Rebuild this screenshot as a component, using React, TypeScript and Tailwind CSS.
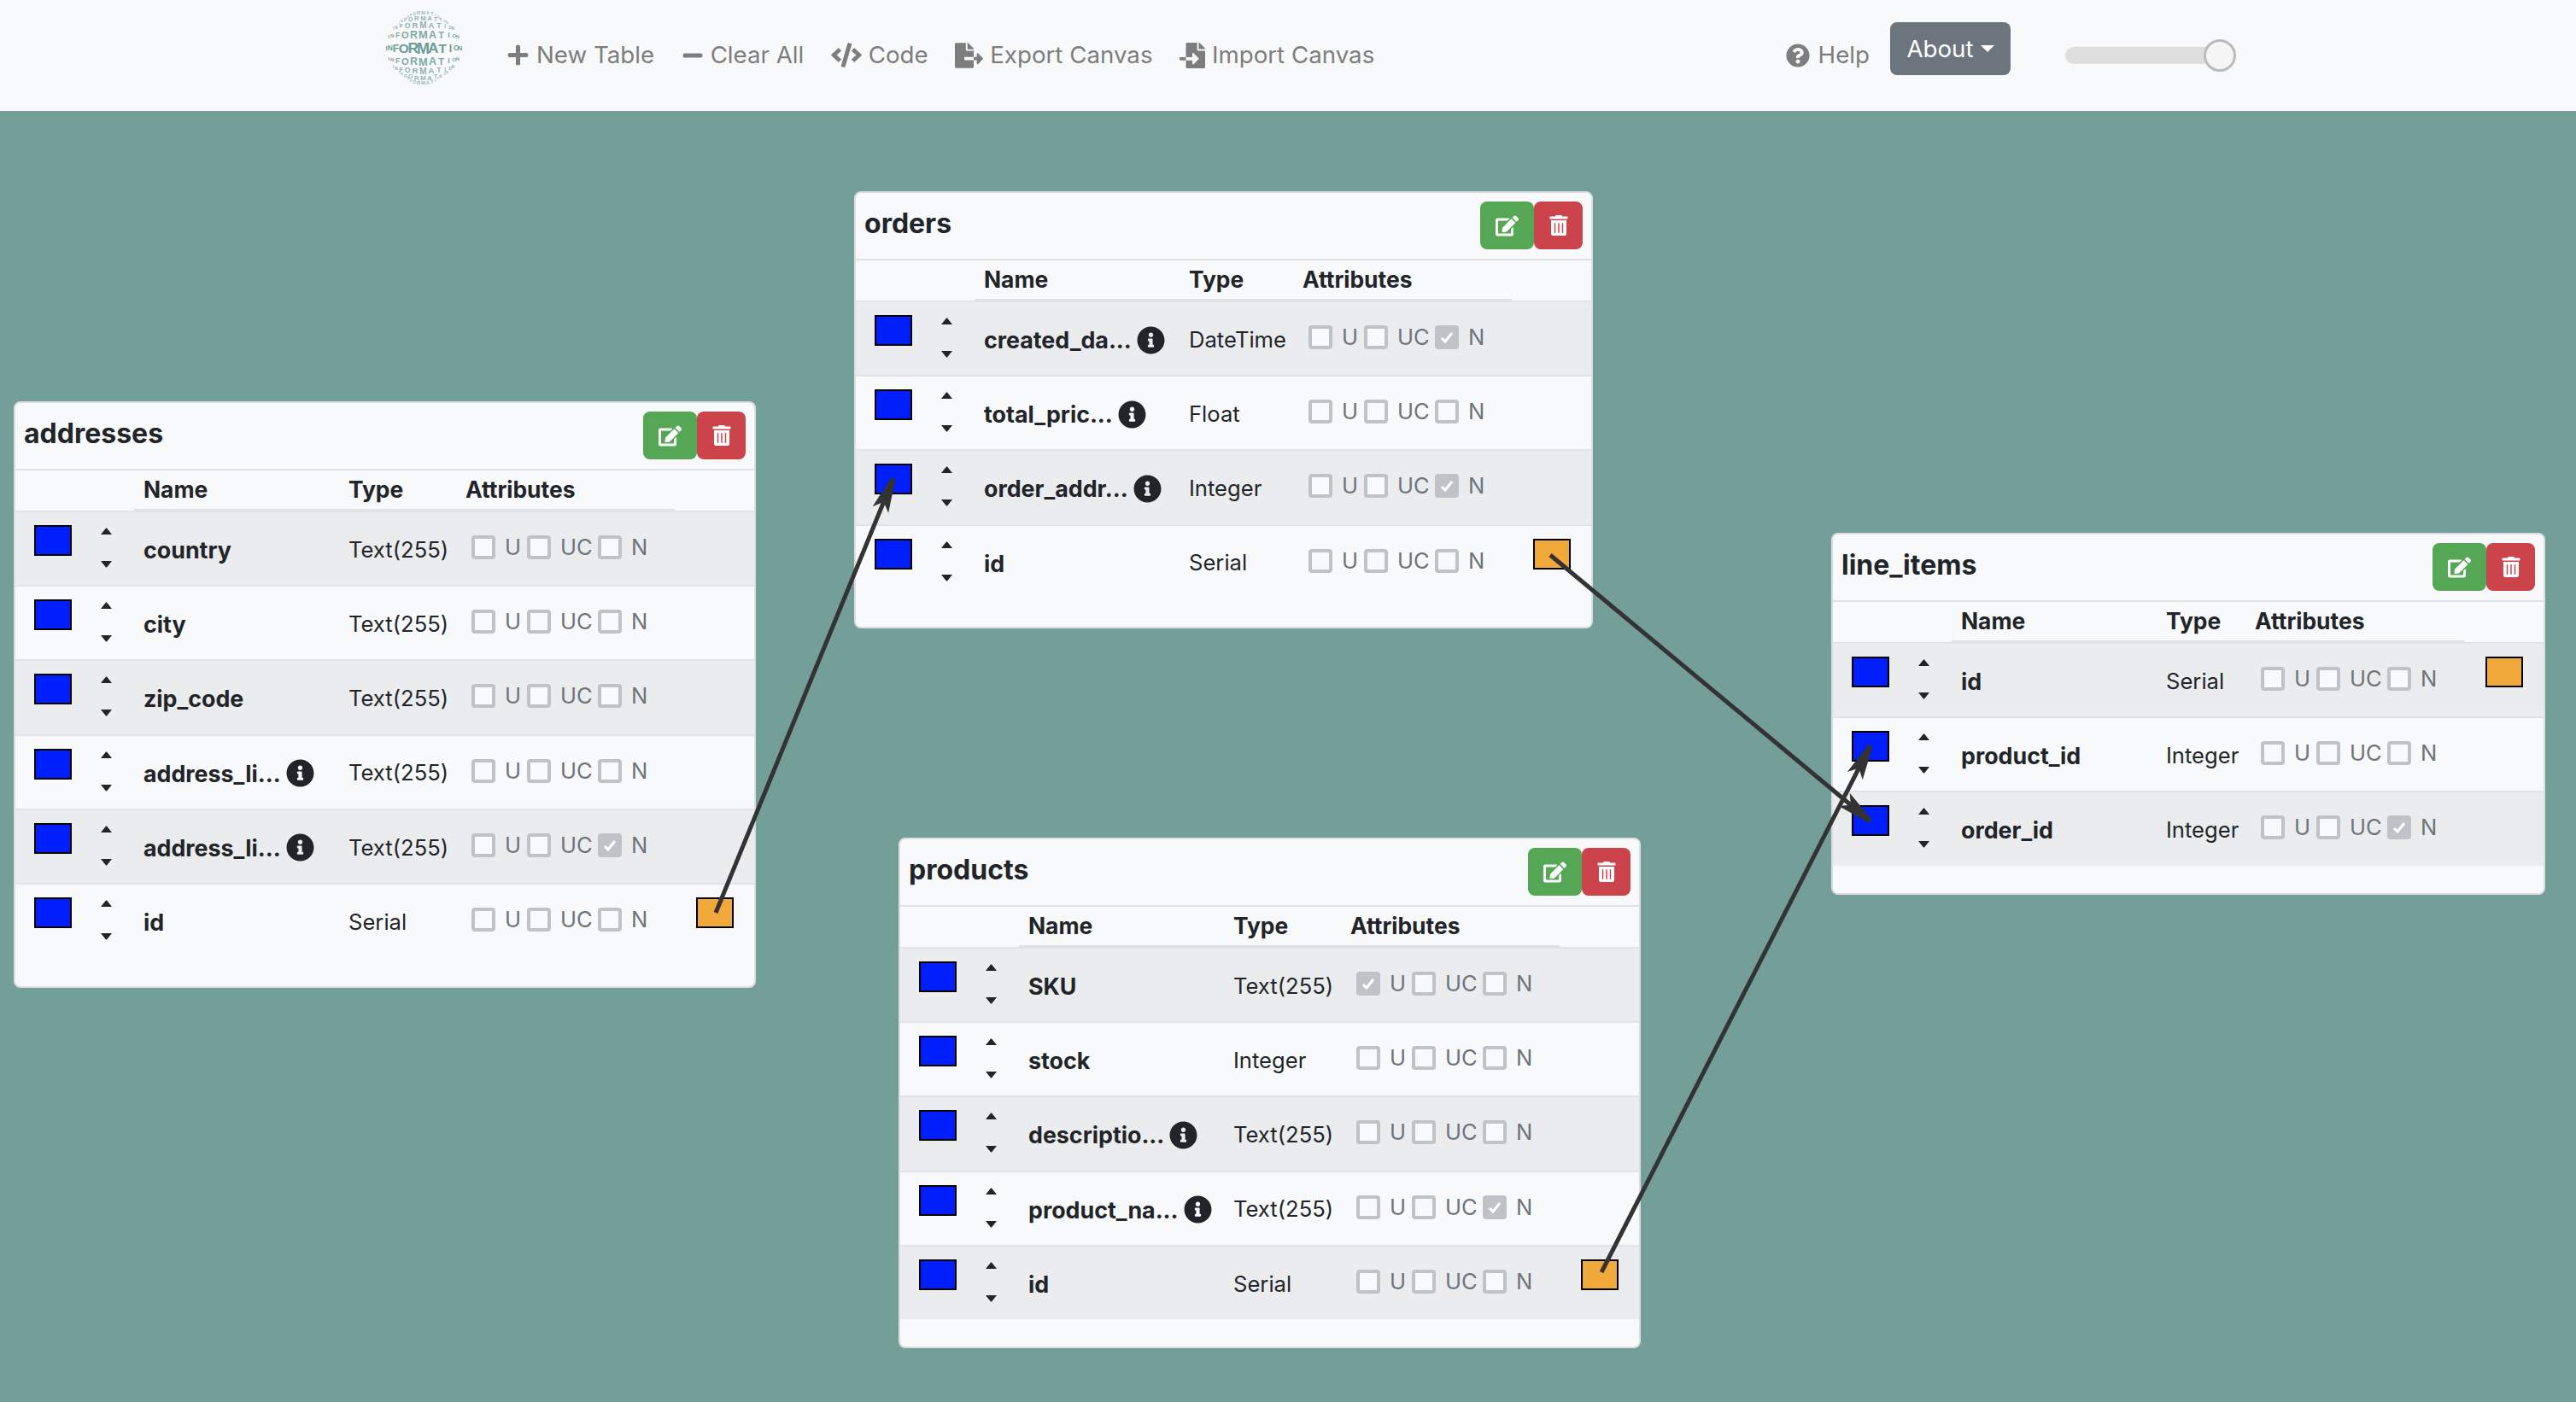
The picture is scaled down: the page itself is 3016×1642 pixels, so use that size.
import { FaPlus, FaMinus, FaCode, FaFileExport, FaFileImport, FaQuestionCircle, FaEdit, FaTrashAlt, FaInfoCircle } from "react-icons/fa";

type Field = { name: string; type: string; info?: boolean; u?: boolean; n?: boolean; key?: boolean };

const addresses: Field[] = [
	{ name: "country", type: "Text(255)" },
	{ name: "city", type: "Text(255)" },
	{ name: "zip_code", type: "Text(255)" },
	{ name: "address_li...", type: "Text(255)", info: true },
	{ name: "address_li...", type: "Text(255)", info: true, n: true },
	{ name: "id", type: "Serial", key: true },
];

const orders: Field[] = [
	{ name: "created_da...", type: "DateTime", info: true, n: true },
	{ name: "total_pric...", type: "Float", info: true },
	{ name: "order_addr...", type: "Integer", info: true, n: true },
	{ name: "id", type: "Serial", key: true },
];

const products: Field[] = [
	{ name: "SKU", type: "Text(255)", u: true },
	{ name: "stock", type: "Integer" },
	{ name: "descriptio...", type: "Text(255)", info: true },
	{ name: "product_na...", type: "Text(255)", info: true, n: true },
	{ name: "id", type: "Serial", key: true },
];

const lineItems: Field[] = [
	{ name: "id", type: "Serial", key: true },
	{ name: "product_id", type: "Integer" },
	{ name: "order_id", type: "Integer", n: true },
];

export default function App() {
	return (
		<div className="flex h-[1642px] w-[3016px] flex-col overflow-hidden bg-[#749e98] font-['Inter',sans-serif]">
			<Navbar />
			<div className="relative flex-1">
				<TableCard title="addresses" fields={addresses} className="left-[16px] top-[340px] h-[687px] w-[869px]" typeCol="w-[137px]" underline="w-[633px]" />
				<TableCard title="orders" fields={orders} className="left-[1000px] top-[94px] h-[512px] w-[865px]" typeCol="w-[133px]" underline="w-[629px]" />
				<TableCard title="products" fields={products} className="left-[1052px] top-[851px] h-[598px] w-[869px]" typeCol="w-[137px]" underline="w-[633px]" />
				<TableCard title="line_items" fields={lineItems} className="left-[2144px] top-[494px] h-[424px] w-[836px]" typeCol="w-[104px]" underline="w-[600px]" />
				<Arrows />
			</div>
		</div>
	);
}

function Navbar() {
	return (
		<div className="flex h-[130px] items-center bg-[#f8f9fa] pl-[449px] pr-[398px] text-[27.7px] text-[#7d7d7d]">
			<Globe />
			<div className="ml-[51px] flex items-center gap-[31.5px]">
				<NavItem icon={<FaPlus className="h-[27px] w-[27px]" />} label="New Table" />
				<NavItem icon={<FaMinus className="h-[26px] w-[26px]" />} label="Clear All" />
				<NavItem icon={<FaCode className="h-[29px] w-[36px]" />} label="Code" />
				<NavItem icon={<FaFileExport className="h-[32px] w-[33px]" />} label="Export Canvas" />
				<NavItem icon={<FaFileImport className="h-[30px] w-[30px]" />} label="Import Canvas" />
			</div>
			<div className="ml-auto flex items-center">
				<div className="flex items-center gap-[10px]">
					<FaQuestionCircle className="h-[28px] w-[28px]" />
					<span>Help</span>
				</div>
				<button className="mb-[16px] ml-[24px] flex h-[62px] w-[141px] items-center justify-center gap-[8px] rounded-[8px] bg-[#6c757d] pt-[2px] text-white">
					About
					<span className="mt-[-2px] h-0 w-0 border-x-[8px] border-t-[8px] border-x-transparent border-t-white" />
				</button>
				<div className="relative ml-[64px] h-[20px] w-[200px] rounded-[10px]">
					<div className="h-[20px] w-[180px] rounded-[10px] bg-[#dedede]" />
					<div className="absolute right-0 top-[-9px] h-[38px] w-[38px] rounded-full border-[3px] border-[#bbbbbb] bg-[#f4f5f4]" />
				</div>
			</div>
		</div>
	);
}

function NavItem({ icon, label }: { icon: React.ReactNode; label: string }) {
	return (
		<div className="flex items-center gap-[8px]">
			{icon}
			<span>{label}</span>
		</div>
	);
}

// rows of the word wrapped round a ball, each letter placed by hand
function Globe() {
	const rows = [
		{ dy: 0, size: 18 },
		{ dy: -16, size: 13 },
		{ dy: 16, size: 13 },
		{ dy: -27, size: 10 },
		{ dy: 27, size: 10 },
		{ dy: -35, size: 8 },
		{ dy: 35, size: 8 },
		{ dy: -41, size: 6 },
		{ dy: 41, size: 6 },
	];
	const word = "INFORMATION";
	return (
		<svg viewBox="0 0 93 92" className="mb-[18px] h-[92px] w-[93px]">
			<g fill="#6f9c97" fontWeight="700" fontFamily="Liberation Sans, sans-serif" textAnchor="middle">
				{rows.map((row, r) => {
					const radius = 44 * Math.sqrt(1 - (row.dy / 46) ** 2);
					return (
						<text key={r} opacity={0.5 + (0.5 * row.size) / 18}>
							{word.split("").map((letter, i) => {
								const lon = ((i - 5) * 15.5 * Math.PI) / 180;
								const scale = Math.max(0.45, Math.cos(lon));
								const size = row.size * scale;
								const x = 46.5 + radius * Math.sin(lon);
								const y = 46 + row.dy * (0.78 + 0.22 * Math.cos(lon)) + size * 0.36;
								return (
									<tspan key={i} x={x.toFixed(1)} y={y.toFixed(1)} fontSize={size.toFixed(1)}>
										{letter}
									</tspan>
								);
							})}
						</text>
					);
				})}
			</g>
		</svg>
	);
}

function TableCard({ title, fields, className, typeCol, underline }: { title: string; fields: Field[]; className: string; typeCol: string; underline: string }) {
	return (
		<div className={`absolute overflow-hidden rounded-[8px] border-2 border-[#dcdee1] bg-[#f8f9fa] text-[#212529] ${className}`}>
			<div className="flex h-[77px] items-start justify-between pl-[10px] pr-[10px] pt-[10px]">
				<div className="mt-[2px] text-[32px] font-bold">{title}</div>
				<div className="flex">
					<div className="flex h-[56px] w-[63px] items-center justify-center rounded-[8px] bg-[#55a755] text-white">
						<FaEdit className="h-[27px] w-[27px]" />
					</div>
					<div className="flex h-[56px] w-[57px] items-center justify-center rounded-[8px] bg-[#cb444b] text-white">
						<FaTrashAlt className="h-[24px] w-[24px]" />
					</div>
				</div>
			</div>
			<div className="h-[49px] border-t-2 border-[#dee2e6]">
				<div className={`ml-[139px] flex h-[49px] items-center border-b-4 border-[#dee2e6] pl-[11px] text-[26.4px] font-bold ${underline}`}>
					<div className="w-[240px]">Name</div>
					<div className={typeCol}>Type</div>
					<div>Attributes</div>
				</div>
			</div>
			{fields.map((field, i) => (
				<FieldRow key={i} field={field} striped={i % 2 === 0} typeCol={typeCol} />
			))}
		</div>
	);
}

function FieldRow({ field, striped, typeCol }: { field: Field; striped: boolean; typeCol: string }) {
	return (
		<div className={`flex h-[87.2px] border-t-2 border-[#e2e3e8] pl-[22px] text-[25.6px] ${striped ? "bg-[#ebecee]" : ""}`}>
			<div className="mt-[15px] h-[36px] w-[44px] border-2 border-black bg-[#001ffb]" />
			<div className="ml-[28px] flex w-[24px] flex-col items-center pt-[18px] text-[#212529]">
				<svg viewBox="0 0 13 8" className="h-[8px] w-[13px]" fill="currentColor">
					<path d="M0 8L6 0.5h1L13 8z" />
				</svg>
				<svg viewBox="0 0 13 8" className="mt-[31px] h-[8px] w-[13px]" fill="currentColor">
					<path d="M0 0L6 7.5h1L13 0z" />
				</svg>
			</div>
			<div className="ml-[32px] flex w-[240px] items-center gap-[6px] pt-[3px] text-[26.8px] font-bold">
				<span>{field.name}</span>
				{field.info && <FaInfoCircle className="h-[33px] w-[33px]" />}
			</div>
			<div className={`flex items-center pt-[3px] ${typeCol}`}>{field.type}</div>
			<div className="flex w-[321px] items-start pl-[7px] pt-[27px] text-[25.6px] leading-[28px] text-[#6c757d]">
				<Check checked={field.u} />
				<span className="ml-[11px] w-[26px]">U</span>
				<Check checked={false} />
				<span className="ml-[11px] w-[44px]">UC</span>
				<Check checked={field.n} />
				<span className="ml-[11px] w-[26px]">N</span>
				{field.key && <div className="ml-auto mr-[7px] mt-[-12px] h-[36px] w-[44px] border-2 border-black bg-[#f2a93b]" />}
			</div>
		</div>
	);
}

function Check({ checked }: { checked?: boolean }) {
	return (
		<span className={`flex h-[28px] w-[28px] shrink-0 items-center justify-center rounded-[4px] border-[4px] border-[#c0c2c8] ${checked ? "bg-[#c0c2c8]" : "bg-[#f8f9fa]"}`}>
			{checked && (
				<svg viewBox="0 0 20 20" className="h-[20px] w-[20px] shrink-0">
					<path d="M4 11l4 4 8-10" fill="none" stroke="#ffffff" strokeWidth="3" />
				</svg>
			)}
		</span>
	);
}

function Arrows() {
	return (
		<svg className="pointer-events-none absolute left-0 top-0 h-[1512px] w-[3016px]">
			<defs>
				<marker id="head" markerUnits="userSpaceOnUse" markerWidth="42" markerHeight="24" refX="40" refY="12" orient="auto">
					<path d="M0 2L38 9L40 12L38 15L0 22L10 12z" fill="#333333" />
				</marker>
			</defs>
			<g stroke="#333333" strokeWidth="5" fill="none">
				<line x1="838" y1="939" x2="1046" y2="430" markerEnd="url(#head)" />
				<line x1="1815" y1="520" x2="2190" y2="832" markerEnd="url(#head)" />
				<line x1="1875" y1="1360" x2="2190" y2="743" markerEnd="url(#head)" />
			</g>
		</svg>
	);
}
